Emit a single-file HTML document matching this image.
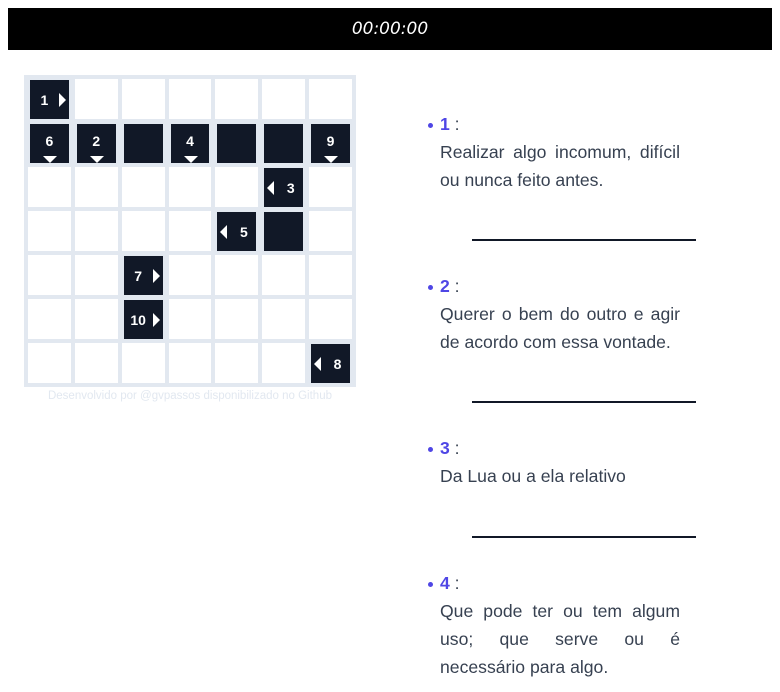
<!DOCTYPE html>
<html><head><meta charset="utf-8"><style>
body{margin:0;background:#fff;font-family:"Liberation Sans",sans-serif;width:780px;height:692px;overflow:hidden;position:relative}
.top{position:absolute;left:8px;top:8px;width:764px;height:42px;background:#000;color:#fff;text-align:center;line-height:42px;font-size:17px;font-style:italic;font-family:"DejaVu Sans",sans-serif}
.grid{position:absolute;left:24px;top:75px;width:324px;height:304px;background:#e2e8f0;padding:4px;display:grid;grid-template-columns:repeat(7,1fr);grid-template-rows:repeat(7,1fr);gap:4px}
.c{background:#fff;position:relative}
.d{background:#111827;margin:1px 2px 0 2px;color:#fff;font-weight:bold;font-size:14px;display:flex;align-items:center;justify-content:center}
.r::after{content:"";position:absolute;right:3px;top:13px;border-left:7px solid #fff;border-top:7px solid transparent;border-bottom:7px solid transparent}
.r{padding-right:10px;box-sizing:border-box}
.l::before{content:"";position:absolute;left:3px;top:13px;border-right:7px solid #fff;border-top:7px solid transparent;border-bottom:7px solid transparent}
.l{padding-left:14px;box-sizing:border-box}
.b::after{content:"";position:absolute;left:13px;bottom:0;border-top:7px solid #fff;border-left:7px solid transparent;border-right:7px solid transparent}
.b{padding-bottom:6px;box-sizing:border-box}
.foot{position:absolute;left:24px;width:332px;top:390px;text-align:center;font-size:11.5px;color:#e2e8f0}
.item{position:absolute;left:428px;width:252px;font-size:17.6px;color:#374151;line-height:28px}
.item .n{color:#4f46e5;font-weight:bold}
.item .n::before{content:"";display:inline-block;width:5px;height:5px;border-radius:50%;background:#4f46e5;margin-right:7px;vertical-align:middle}
.item p{margin:0 0 0 12px;text-align:justify}
.line{position:absolute;left:472px;width:224px;height:2px;background:#111827}
</style></head><body>
<div class="top">00:00:00</div>
<div class="grid">
<div class="c d r">1</div><div class="c"></div><div class="c"></div><div class="c"></div><div class="c"></div><div class="c"></div><div class="c"></div>
<div class="c d b">6</div><div class="c d b">2</div><div class="c d"></div><div class="c d b">4</div><div class="c d"></div><div class="c d"></div><div class="c d b">9</div>
<div class="c"></div><div class="c"></div><div class="c"></div><div class="c"></div><div class="c"></div><div class="c d l">3</div><div class="c"></div>
<div class="c"></div><div class="c"></div><div class="c"></div><div class="c"></div><div class="c d l">5</div><div class="c d"></div><div class="c"></div>
<div class="c"></div><div class="c"></div><div class="c d r">7</div><div class="c"></div><div class="c"></div><div class="c"></div><div class="c"></div>
<div class="c"></div><div class="c"></div><div class="c d r">10</div><div class="c"></div><div class="c"></div><div class="c"></div><div class="c"></div>
<div class="c"></div><div class="c"></div><div class="c"></div><div class="c"></div><div class="c"></div><div class="c"></div><div class="c d l">8</div>
</div>
<div class="foot">Desenvolvido por @gvpassos disponibilizado no Github</div>
<div class="item" style="top:110px"><div><span class="n">1</span> :</div><p>Realizar algo incomum, difícil ou nunca feito antes.</p></div>
<div class="line" style="top:239px"></div>
<div class="item" style="top:272px"><div><span class="n">2</span> :</div><p>Querer o bem do outro e agir de acordo com essa vontade.</p></div>
<div class="line" style="top:401px"></div>
<div class="item" style="top:434px"><div><span class="n">3</span> :</div><p>Da Lua ou a ela relativo</p></div>
<div class="line" style="top:536px"></div>
<div class="item" style="top:569px"><div><span class="n">4</span> :</div><p>Que pode ter ou tem algum uso; que serve ou é necessário para algo.</p></div>
</body></html>
